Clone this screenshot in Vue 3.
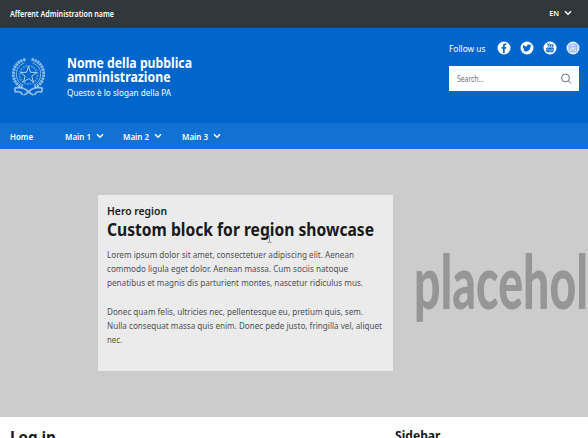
<script setup>
const menu = ['Main 1', 'Main 2', 'Main 3']
const intro = [
  ['Lorem ipsum dolor sit amet, consectetuer adipiscing elit. Aenean', 247],
  ['commodo ligula eget dolor. Aenean massa. Cum sociis natoque', 241],
  ['penatibus et magnis dis parturient montes, nascetur ridiculus mus.', 256],
]
const more = [
  ['Donec quam felis, ultricies nec, pellentesque eu, pretium quis, sem.', 256],
  ['Nulla consequat massa quis enim. Donec pede justo, fringilla vel, aliquet', 275],
  ['nec.', 15],
]
</script>

<template>
  <div class="page">
    <header>
      <div class="slim">
        <svg class="fit" width="110" height="20"><text x="0" y="13.2" font-size="9" font-weight="600" textLength="104" lengthAdjust="spacingAndGlyphs">Afferent Administration name</text></svg>
        <div class="lang">
          <span>EN</span>
          <svg class="chev" viewBox="0 0 8 6"><path d="M1 1.2 4 4.2 7 1.2" /></svg>
        </div>
      </div>
      <div class="center">
        <svg class="emblem" viewBox="0 0 34 40">
          <g fill="none" stroke="currentColor">
            <path d="M14 2.500C5 4 1 12 2 19c1 6 4 10 9 11M20 2.500c9 1.500 13 9.500 12 16.500-1 6-4 10-9 11" stroke-width="3" stroke-dasharray="2.3 .7" opacity=".65" />
            <path d="M13 6C7 8 4 13 5 19s4 8 7 9M21 6c6 2 9 7 8 13s-4 8-7 9" stroke-width="1" opacity=".6" />
            <circle cx="17" cy="18" r="9" stroke-width="2" stroke-dasharray="1.8 1" opacity=".4" />
            <path d="m17 9.500 2 5.800 6.100.1-4.800 3.800 1.700 5.800-5-3.400-5 3.400 1.700-5.800-4.800-3.800 6.100-.1z" fill="#0066cc" stroke-width="1" opacity=".85" />
            <path d="M3 31c5-1 9-1 13 3 1 1 3 3 6 4M31 31c-5-1-9-1-13 3-1 1-3 3-6 4M3 31l1 4c3-1 6 0 7 3M31 31l-1 4c-3-1-6 0-7 3" stroke-width="1.8" opacity=".65" />
          </g>
        </svg>
        <div class="brand">
          <svg class="fit" width="150" height="48">
            <text x="0" y="17.7" font-size="13.4" font-weight="700" textLength="125" lengthAdjust="spacingAndGlyphs">Nome della pubblica</text>
            <text x="0" y="31.6" font-size="13.4" font-weight="700" textLength="103.5" lengthAdjust="spacingAndGlyphs">amministrazione</text>
            <text x="0" y="45.5" font-size="9.7" textLength="104" lengthAdjust="spacingAndGlyphs">Questo è lo slogan della PA</text>
          </svg>
        </div>
        <div class="tools">
          <div class="social">
            <svg class="fit" width="48" height="14"><text x="0" y="11.3" font-size="9.8" textLength="36.5" lengthAdjust="spacingAndGlyphs">Follow us</text></svg>
            <svg class="net" viewBox="0 0 14 14"><circle cx="7" cy="7" r="6.5" fill="#fff" /><path fill="#06c" d="M6 12V7.700H4.600V6H6V4.800C6 3.300 6.900 2.500 8.200 2.500h1.100V4h-.8c-.6 0-.8.3-.8.9V6h1.500L9 7.700H7.700V12z" /></svg>
            <svg class="net" viewBox="0 0 14 14"><circle cx="7" cy="7" r="6.5" fill="#fff" /><path fill="#06c" d="M3.200 3.800C4.200 5 5.400 5.600 6.900 5.700 6.500 3.800 8.700 2.900 9.900 4l1.300-.4-.7 1.100.9-.2-.9 1c0 4.300-4.500 6.200-7.900 4.300 1 0 1.900-.2 2.600-.8-.8 0-1.400-.5-1.700-1.300h.8C3.400 7.500 2.800 6.800 2.800 6l.8.1C2.900 5.500 2.700 4.700 3.200 3.800z" /></svg>
            <svg class="net" viewBox="0 0 14 14"><circle cx="7" cy="7" r="6.5" fill="#fff" /><rect x="3.300" y="6.500" width="7.400" height="4.700" rx="1" fill="#06c" /><path fill="none" stroke="#06c" stroke-width=".9" d="m4.300 2.300 1 2v1.500m1-3.500-1 2M6.900 3.500v2h.8v-2h-.8M9 3.200v2.400h1V3.200" /><path fill="none" stroke="#9bc3ee" stroke-width=".7" d="M4.200 7.800h1.500m-.8 0v2.500m1.500-2v2h1m0-2v2M8.700 7.500v2.800h1V8.500h-1" /></svg>
            <svg class="net" viewBox="0 0 14 14"><circle cx="7" cy="7" r="6.5" fill="#e4eefa" /><g fill="none" stroke="#7fa8e0" stroke-width=".9"><rect x="3.200" y="3.200" width="7.600" height="7.600" rx="1" /><circle cx="7" cy="7.400" r="2" /><path d="M3.200 5.500h2m3.600 0h2M8.900 4.200h1M2 2.800l1.500-1M11 2.500l1 1" /></g></svg>
          </div>
          <div class="search">
            <svg class="fit" width="40" height="16"><text x="0" y="11" font-size="8.300" textLength="27" lengthAdjust="spacingAndGlyphs">Search...</text></svg>
            <svg class="lens" viewBox="0 0 12 12"><circle cx="5.500" cy="5" r="3.900" /><path d="m8.300 7.800 2.700 2.700" /></svg>
          </div>
        </div>
      </div>
      <nav>
        <svg class="fit" width="55" height="16"><text x="0" y="11.6" font-size="9.5" font-weight="600" textLength="23" lengthAdjust="spacingAndGlyphs">Home</text></svg>
        <div v-for="m in menu" :key="m" class="item">
          <svg class="fit" width="31" height="16"><text x="0" y="11.6" font-size="9.5" font-weight="600" textLength="26" lengthAdjust="spacingAndGlyphs">{{ m }}</text></svg>
          <svg class="chev" viewBox="0 0 8 6"><path d="M1 1.2 4 4.2 7 1.2" /></svg>
        </div>
      </nav>
    </header>
    <section class="hero">
      <div class="card">
        <svg class="fit" width="280" height="46">
          <text x="0" y="15.2" font-size="11.2" font-weight="600" textLength="60" lengthAdjust="spacingAndGlyphs">Hero region</text>
          <text x="0" y="35.5" font-size="17.5" font-weight="700" textLength="267" lengthAdjust="spacingAndGlyphs">Custom block for region showcase</text>
        </svg>
        <div v-for="(block, b) in [intro, more]" :key="b" class="para">
          <svg v-for="[line, width] in block" :key="line" class="fit line" width="280" height="14">
            <text x="0" y="11.800" font-size="9.400" :textLength="width" lengthAdjust="spacingAndGlyphs">{{ line }}</text>
          </svg>
        </div>
        <svg class="cursor" viewBox="0 0 5 8"><path d="M.5.5h1.300l.7.700.7-.7h1.300M2.500 1v6M.5 7.500h1.300l.7-.7.7.7h1.300" /></svg>
      </div>
      <svg class="word" viewBox="0 0 174 90"><text x="0" y="62.5" textLength="174" lengthAdjust="spacingAndGlyphs">placehol</text></svg>
    </section>
    <main>
      <svg class="fit" width="385" height="26"><text x="0" y="18.500" font-size="16" font-weight="700" textLength="46" lengthAdjust="spacingAndGlyphs">Log in</text></svg>
      <svg class="fit" width="60" height="26"><text x="0" y="15.500" font-size="12" font-weight="700" textLength="45.500" lengthAdjust="spacingAndGlyphs">Sidebar</text></svg>
    </main>
  </div>
</template>

<style>
body { margin: 0; overflow: hidden; }
</style>

<style scoped>
.page { width: 588px; height: 438px; overflow: hidden; background: #fff; font-family: "Noto Sans", sans-serif; color: #fff; }
svg { display: block; flex: none; }
.fit { overflow: visible; }
.fit text { fill: currentColor; }
.slim { box-sizing: border-box; height: 28px; background: #30373d; display: flex; align-items: center; justify-content: space-between; padding: 0 16px 0 10px; }
.lang { display: flex; align-items: center; gap: 5px; font-size: 7.3px; font-weight: 600; line-height: 10px; margin-top: -2px; }
.chev { width: 8px; height: 6px; fill: none; stroke: #fff; stroke-width: 1.5; }
.center { height: 95px; background: #06c; display: flex; box-sizing: border-box; padding-left: 11px; }
.emblem { width: 35px; height: 40px; margin-top: 29px; color: #d9e9fa; }
.brand { margin: 22px 0 0 21px; }
.tools { margin: 13px 9px 0 auto; width: 130px; }
.social { display: flex; align-items: center; height: 14px; }
.net { width: 14px; height: 14px; margin-right: 9px; }
.search { box-sizing: border-box; margin-top: 11px; height: 25px; width: 130px; background: #fff; color: #68717a; display: flex; justify-content: space-between; align-items: center; padding: 0 7px 0 8px; }
.lens { width: 12px; height: 12px; fill: none; stroke: #5c6f82; stroke-width: 1; }
nav { height: 26px; background: #1172d3; display: flex; align-items: center; padding-left: 10px; }
.item { display: flex; align-items: center; width: 58.3px; }
.hero { height: 268px; background: #ccc; display: flex; box-sizing: border-box; padding: 46px 0 0 98px; overflow: hidden; }
.card { position: relative; box-sizing: border-box; width: 295px; height: 176px; flex: none; background: #ebebeb; color: #17191c; padding: 5px 9px; }
.para { color: #4b5157; }
.para + .para { margin-top: 15px; }
.cursor { position: absolute; left: 169px; top: 40px; width: 5px; height: 8px; fill: none; stroke: #666; stroke-width: .7; }
.word { width: 174px; height: 90px; margin: 51px 0 0 21px; overflow: visible; font-family: Lato, sans-serif; font-size: 75px; font-weight: 900; fill: #969696; }
main { display: flex; padding: 7px 0 0 10px; color: #17191c; }
</style>
